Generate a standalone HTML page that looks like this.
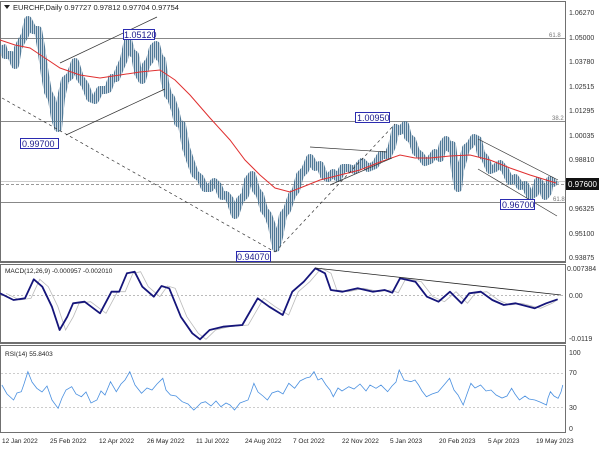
<!DOCTYPE html>
<html><head><meta charset="utf-8"><style>
html,body{margin:0;padding:0;background:#fff;width:600px;height:450px;overflow:hidden}
svg{display:block;font-family:"Liberation Sans",sans-serif}
</style></head><body>
<svg width="600" height="450" viewBox="0 0 600 450" xmlns="http://www.w3.org/2000/svg">
<defs>
<pattern id="bp" patternUnits="userSpaceOnUse" width="2" height="4">
<rect x="0" y="0" width="1.3" height="4" fill="#4f7896"/>
</pattern>
</defs>
<rect width="600" height="450" fill="#fff"/>
<rect x="0.5" y="1.5" width="565" height="260" fill="none" stroke="#707070"/>
<rect x="0.5" y="264.5" width="565" height="78" fill="none" stroke="#707070"/>
<rect x="0.5" y="345.5" width="565" height="87" fill="none" stroke="#707070"/>
<line x1="0" y1="262.5" x2="566" y2="262.5" stroke="#707070"/>
<line x1="0" y1="343.5" x2="566" y2="343.5" stroke="#707070"/>
<line x1="1" y1="38.5" x2="565" y2="38.5" stroke="#888"/>
<line x1="1" y1="121.5" x2="565" y2="121.5" stroke="#888"/>
<line x1="1" y1="202.5" x2="565" y2="202.5" stroke="#888"/>
<line x1="1" y1="184.5" x2="565" y2="184.5" stroke="#999" stroke-dasharray="3,2"/>
<line x1="1" y1="181.5" x2="565" y2="181.5" stroke="#ccc"/>
<g fill="#777" font-size="6">
<text x="549" y="37">61.8</text><text x="552" y="120">38.2</text><text x="553" y="201">61.8</text></g>
<polyline fill="none" stroke="url(#bp)" stroke-width="8" stroke-linejoin="round" points="2,45 5,55 8,55 11,55 15,65 18,48 22,40 25,35 28,20 33,30 38,30 41,47 45,75 48,92 52,100 55,118 58,128 61,98 65,80 70,76 75,62 80,78 85,85 90,98 95,100 100,90 105,90 108,89 112,78 116,78 120,68 124,59 128,40 131,52 135,55 138,73 142,80 146,65 150,60 153,48 156,45 159,57 162,60 165,83 168,95 171,98 175,110 178,123 182,125 186,148 190,160 195,174 200,178 205,188 210,188 214,182 218,186 222,196 226,195 230,200 235,215 240,200 245,195 248,180 252,175 256,190 260,195 264,210 268,215 272,226 276,248 279,237 283,215 287,210 292,195 296,190 300,175 305,170 310,158 315,167 320,165 324,176 328,178 333,173 338,178 343,168 348,168 355,170 362,162 368,168 375,165 381,155 388,155 392,146 396,128 400,131 405,125 408,137 412,140 416,152 420,155 425,162 430,160 435,153 440,158 443,144 446,140 449,148 452,145 455,170 458,188 460,170 463,160 466,148 470,145 474,138 478,140 481,154 485,158 490,170 495,168 500,164 505,170 510,181 515,178 520,186 525,185 530,196 535,193 538,181 542,186 545,196 548,192 550,180 553,183 556,180"/>
<polyline fill="none" stroke="#e03030" stroke-width="1" points="0,40 15,45 30,48 45,58 60,68 80,75 100,78 120,75 140,72 160,70 175,80 190,95 210,118 230,140 245,160 260,175 275,188 290,192 305,186 320,180 340,175 360,170 380,162 400,155 415,158 430,158 450,156 470,155 490,160 510,168 530,175 556,183"/>
<g stroke="#333" stroke-width="0.7" fill="none">
<line x1="60" y1="63" x2="157" y2="17"/>
<line x1="66" y1="135" x2="165" y2="89"/>
<line x1="310" y1="147" x2="387" y2="152"/>
<line x1="330" y1="185" x2="392" y2="158"/>
<line x1="478" y1="139" x2="558" y2="180"/>
<line x1="478" y1="169" x2="557" y2="216"/>
<line x1="2" y1="98" x2="275" y2="252" stroke-dasharray="3,3"/>
<line x1="275" y1="252" x2="395" y2="124" stroke-dasharray="3,3"/>
</g>
<g font-size="9" fill="#1a1a8a">
<rect x="123.5" y="29.5" width="31" height="10" fill="#fff" stroke="#2b2bb0"/><text x="124" y="38">1.05120</text>
<rect x="20.5" y="138.5" width="38" height="10" fill="#fff" stroke="#2b2bb0"/><text x="22" y="147">0.99700</text>
<rect x="236.5" y="251.5" width="34" height="10" fill="#fff" stroke="#2b2bb0"/><text x="237" y="260">0.94070</text>
<rect x="355.5" y="112.5" width="34" height="10" fill="#fff" stroke="#2b2bb0"/><text x="357" y="121">1.00950</text>
<rect x="500.5" y="199.5" width="34" height="10" fill="#fff" stroke="#2b2bb0"/><text x="502" y="208">0.96700</text>
</g>
<path d="M4 5 L10 5 L7 9 Z" fill="#222"/>
<text x="13" y="10" font-size="7.5" fill="#222">EURCHF,Daily  0.97727 0.97812 0.97704 0.97754</text>
<g font-size="7" fill="#333">
<text x="569" y="15">1.06270</text><text x="569" y="40">1.05000</text><text x="569" y="64">1.03780</text>
<text x="569" y="89">1.02515</text><text x="569" y="113">1.01295</text><text x="569" y="138">1.00035</text>
<text x="569" y="162">0.98810</text><text x="569" y="211">0.96325</text>
<text x="569" y="236">0.95100</text><text x="569" y="260">0.93875</text>
<text x="567" y="271">0.007384</text><text x="569" y="298">0.00</text><text x="569" y="341">-0.0119</text>
<text x="569" y="355">100</text><text x="569" y="375">70</text><text x="569" y="410">30</text><text x="569" y="431">0</text>
</g>
<rect x="566" y="178" width="33" height="12" fill="#111"/>
<text x="568" y="187" font-size="8" fill="#fff">0.97600</text>
<line x1="1" y1="295.5" x2="565" y2="295.5" stroke="#bbb" stroke-dasharray="2,2"/>
<polyline fill="none" stroke="#bbb" stroke-width="0.8" points="6,293.3 19.5,300 31,298.3 39.8,279.3 48.3,286.7 57.9,306.7 65.6,330 73.3,316.7 79.1,303.3 90.6,301.7 106,313.3 117.5,291.7 125.2,291.7 132.9,273.3 140.6,271.7 148.3,286.7 159.8,296.7 167.5,286 175.2,288.3 186.8,316.7 198.3,333.3 206,339.3 215.6,330 229,326.7 248.3,325 263.7,298.3 275.2,306.7 288.7,315 298.3,291.7 309.8,281.7 321.4,268.3 331,273.3 336.8,290 348.3,291.7 363.7,288.3 379,291.7 390.6,290 398.3,292.7 406,278.3 413.7,280 421.4,281.7 432.9,296.7 444.5,301.7 456,291.7 467.5,303.3 475.2,293.3 486.8,291.7 498.3,300 509.8,305 521.4,303.3 540.6,308.3 552.2,303.3 557,300"/>
<polyline fill="none" stroke="#15157a" stroke-width="1.8" stroke-linejoin="round" points="0,293.3 13.5,300 25,298.3 33.8,279.3 42.3,286.7 51.9,306.7 59.6,330 67.3,316.7 73.1,303.3 84.6,301.7 100,313.3 111.5,291.7 119.2,291.7 126.9,273.3 134.6,271.7 142.3,286.7 153.8,296.7 161.5,286 169.2,288.3 180.8,316.7 192.3,333.3 200,339.3 209.6,330 223,326.7 242.3,325 257.7,298.3 269.2,306.7 282.7,315 292.3,291.7 303.8,281.7 315.4,268.3 325,273.3 330.8,290 342.3,291.7 357.7,288.3 373,291.7 384.6,290 392.3,292.7 400,278.3 407.7,280 415.4,281.7 426.9,296.7 438.5,301.7 450,291.7 461.5,303.3 469.2,293.3 480.8,291.7 492.3,300 503.8,305 515.4,303.3 534.6,308.3 546.2,303.3 557.7,299.3"/>
<line x1="315" y1="268" x2="561" y2="295" stroke="#222" stroke-width="0.8"/>
<text x="5" y="273" font-size="6.5" fill="#222">MACD(12,26,9) -0.000957 -0.002010</text>
<line x1="1" y1="373.5" x2="565" y2="373.5" stroke="#ccc" stroke-dasharray="2,2"/>
<line x1="1" y1="407.5" x2="565" y2="407.5" stroke="#ccc" stroke-dasharray="2,2"/>
<polyline fill="none" stroke="#4a90e0" stroke-width="0.8" points="1.9,385 7,394 13.6,400 17,393 21.3,391.7 24,384 27.9,371.7 32,382 36.8,388.3 42,392 47,386 52,400 58.1,408.3 62,398 66,390 71.7,386.7 76,394 81.4,396.7 86,392 91,403 96.9,400 101,391 105,395 110.5,381.7 116.3,391.7 121,384 125,380 129.8,371.7 135,385 141.5,393.3 147,388 152,390 157,384 162.8,378.3 166,390 170.5,395 176,396 182.2,401.7 188,404 193.8,410 198,406 201,403 205.4,401.7 211,406 216,401 220.9,406.7 226,403 230,405 234.5,410 240,403 248,400 251,392 253.9,383.3 258,392 263,396 267.4,400 272,393 278,391 283,394 288.8,383.3 294.6,388.3 300,381 306,378 310,377 314,371.7 318,380 321.7,378.3 326,385 330,390 333.3,396.7 338,388 342,391 348.8,386.7 354,389 360,384 366,391 370,385 376,388.3 381,385 387.6,391.7 392,386 396,382 399.2,370 404,380 410.9,381.7 415,380 418.6,385 422,391 426.4,396.7 432,394 438,392 444,385 449.6,378.3 454,390 458,395 463.2,405 467,394 470.9,383.3 475,388 480.6,385 486,391 491,390 496.1,395 502,398 507,396 511.6,388.3 515,394 519.4,400 525,396 529,399 534.9,400 540,402 546.5,405 548,398 550.4,391.7 554,396 558.1,398.3 561,392 562.8,385"/>
<text x="5" y="356" font-size="6.5" fill="#222">RSI(14) 55.8403</text>
<g font-size="6.5" fill="#222">
<text x="2" y="443">12 Jan 2022</text><text x="50" y="443">25 Feb 2022</text><text x="99" y="443">12 Apr 2022</text>
<text x="147" y="443">26 May 2022</text><text x="196" y="443">11 Jul 2022</text><text x="245" y="443">24 Aug 2022</text>
<text x="293" y="443">7 Oct 2022</text><text x="342" y="443">22 Nov 2022</text><text x="390" y="443">5 Jan 2023</text>
<text x="439" y="443">20 Feb 2023</text><text x="488" y="443">5 Apr 2023</text><text x="536" y="443">19 May 2023</text>
</g>
</svg>
</body></html>
